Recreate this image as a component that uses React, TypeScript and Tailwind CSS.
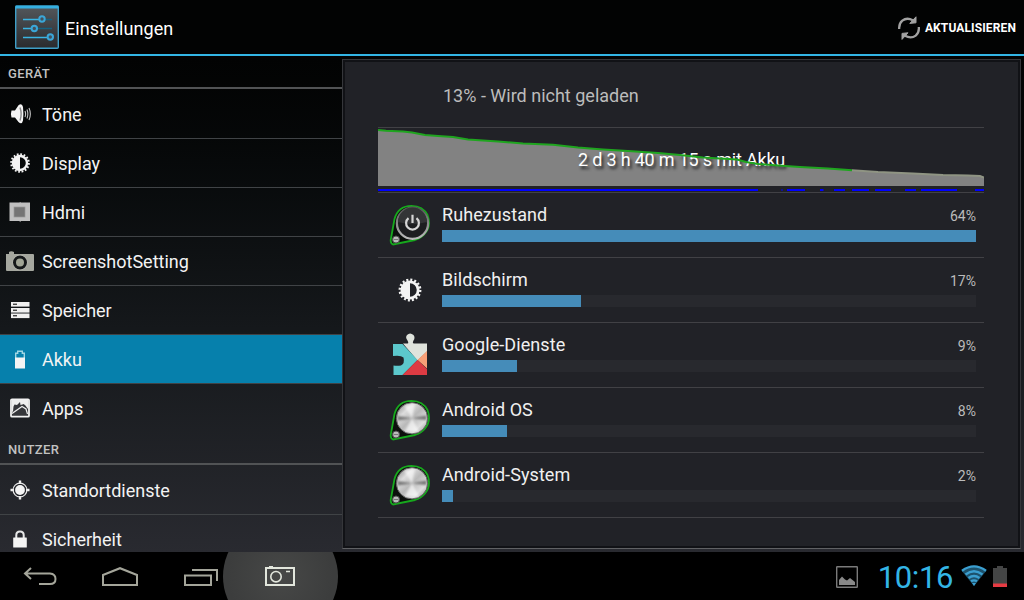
import type { ReactNode } from 'react'

interface NavItem {
  label: string
  icon: ReactNode
  active?: boolean
}

interface UsageEntry {
  name: string
  percent: number
  width: number
  icon: ReactNode
}

function SoundIcon() {
  return (
    <svg width="24" height="24" viewBox="0 0 24 24" fill="none">
      <path d="M3.5 8.5H7L10.5 3.2Q14 0.5 15 5Q15.8 12 15 18.5Q14 23 10.5 20L7 15.5H3.5Q2.3 12 3.5 8.5Z" fill="#f4f4f4" />
      <path d="M12 5.5Q14.3 12 12 18.5" stroke="#8a8a8a" strokeWidth="1.4" />
      <path d="M17 9Q18.2 12 17 15M19 7.5Q20.7 12 19 16.5M21 6Q23.7 12 21 18" stroke="#c4c4c4" strokeWidth="1.1" />
    </svg>
  )
}

function BrightnessIcon({ size = 24 }: { size?: number }) {
  return (
    <svg width={size} height={size} viewBox="0 0 24 24" fill="none">
      <circle cx="12" cy="12" r="8.8" stroke="#f4f4f4" strokeWidth="2" strokeDasharray="1.75 1.705" />
      <circle cx="12" cy="12" r="7" stroke="#f4f4f4" strokeWidth="2.4" />
      <path d="M12 4.5A7.5 7.5 0 0 0 12 19.5Z" fill="#f4f4f4" />
    </svg>
  )
}

function HdmiIcon() {
  return (
    <svg width="24" height="24" viewBox="0 0 24 24">
      <path d="M1.5 2.5H11.5L12 2L13 2.5H22V21H13L12 22L11.5 21H1.5Z" fill="#c0c0c0" />
      <rect x="6" y="7" width="11" height="10" fill="#757575" stroke="#999" strokeWidth="0.7" />
    </svg>
  )
}

function CameraIcon() {
  return (
    <svg width="30" height="24" viewBox="0 0 30 24">
      <path d="M1 5H4V3Q6 1.5 9 3V5H28Q29 5 29 6V21Q29 22 28 22H2Q1 22 1 21Z" fill="#a5a79f" />
      <circle cx="15" cy="13.5" r="7.4" fill="#c2c4bc" />
      <circle cx="15" cy="13.5" r="5.5" fill="#a1a596" stroke="#15181a" strokeWidth="3" />
    </svg>
  )
}

function StorageIcon() {
  return (
    <svg width="24" height="24" viewBox="0 0 24 24">
      {[4, 10, 15.5].map(y => (
        <g key={y}>
          <rect x="3" y={y} width="18.5" height="4.6" fill="#f0f0f0" />
          <rect x="5" y={y + 1.6} width="4" height="1.3" fill="#333" />
        </g>
      ))}
    </svg>
  )
}

function BatteryIcon() {
  return (
    <svg width="24" height="24" viewBox="0 0 24 24" fill="none">
      <path d="M7.7 11V6.2H9.7V4.2H14.3V6.2H16.3V11" stroke="#9fd6e4" strokeWidth="1.4" />
      <rect x="7" y="10.5" width="10" height="11" fill="#f4f4f4" />
    </svg>
  )
}

function AppsIcon() {
  return (
    <svg width="24" height="24" viewBox="0 0 24 24" fill="none">
      <rect x="3" y="3.3" width="18" height="17.4" rx="1" fill="#35363a" stroke="#f2f2f2" strokeWidth="1.8" />
      <path d="M4 4H20V13L17 9L13 10L4 16Z" fill="#eee" />
      <path d="M5.5 10.5L6.5 8.5L9 9L12 6L12.5 9L16 8L17.5 10.5L12 12.5L5 15.5Z" fill="#35363a" />
      <path d="M4 17.5L14 10.5L18 13L19.5 18" stroke="#eee" strokeWidth="1.2" />
    </svg>
  )
}

function LocationIcon() {
  return (
    <svg width="24" height="24" viewBox="0 0 24 24" fill="none">
      <path d="M12 2.5V6M12 18V21.5M2.5 12H6M18 12H21.5" stroke="#f0f0f0" strokeWidth="2.4" />
      <circle cx="12" cy="12" r="6.9" stroke="#e6e6e6" strokeWidth="1.2" />
      <circle cx="12" cy="12" r="4.9" fill="#f4f4f4" />
    </svg>
  )
}

function LockIcon() {
  return (
    <svg width="24" height="24" viewBox="0 0 24 24" fill="none">
      <path d="M8.3 12V8Q8.3 4.5 12 4.5Q15.7 4.5 15.7 8V12" stroke="#e8e8e8" strokeWidth="2" />
      <rect x="5.2" y="10.5" width="13.6" height="10" rx="0.5" fill="#f4f4f4" />
    </svg>
  )
}

function SettingsLogo() {
  return (
    <svg width="44" height="44" viewBox="0 0 44 44" fill="none">
      <defs>
        <linearGradient id="tile" x1="0" y1="0" x2="0" y2="1">
          <stop offset="0" stopColor="#53575b" />
          <stop offset="1" stopColor="#2a2b2e" />
        </linearGradient>
      </defs>
      <rect x="0.7" y="1.2" width="42.6" height="42" rx="1" fill="url(#tile)" stroke="#3f9fc8" strokeWidth="1.4" />
      <rect x="0.5" y="0.5" width="43" height="3" fill="#35afe0" />
      <path d="M8 14.5H24M8 23.5H16M8 32.5H32" stroke="#3bb4e2" strokeWidth="1.5" />
      <path d="M30 14.5H37M22 23.5H37" stroke="#17617f" strokeWidth="1.4" />
      <g stroke="#3aa6d8" strokeWidth="2" fill="#45505a">
        <circle cx="27" cy="14" r="2.7" />
        <circle cx="19.3" cy="23.5" r="2.7" />
        <circle cx="35.3" cy="32" r="2.7" />
      </g>
    </svg>
  )
}

function RefreshIcon() {
  return (
    <svg width="24" height="24" viewBox="0 0 24 24" fill="none">
      <path d="M2.2 13Q1.8 7.5 5.3 4.6Q10 1 15.8 4.3M21.8 11Q22.4 16.5 18.7 19.6Q14 23.2 8 19.8" stroke="#a2a2a2" strokeWidth="2.3" />
      <path d="M12.8 7.4L19 6.8V0.8ZM11 16.8L5 17.4V23.4Z" fill="#a2a2a2" stroke="#a2a2a2" />
    </svg>
  )
}

// round knob hanging in a green teardrop outline
function KnobIcon({ power = false }: { power?: boolean }) {
  return (
    <svg width="44" height="44" viewBox="0 0 44 44" fill="none">
      <defs>
        <linearGradient id="steel" x1="0" y1="0" x2="1" y2="1">
          <stop offset="0" stopColor="#777" />
          <stop offset="0.28" stopColor="#ddd" />
          <stop offset="0.5" stopColor="#b9b9b9" />
          <stop offset="0.75" stopColor="#dedede" />
          <stop offset="1" stopColor="#858585" />
        </linearGradient>
        <linearGradient id="rim" x1="0" y1="0" x2="0" y2="1">
          <stop offset="0" stopColor="#555" />
          <stop offset="1" stopColor="#bbb" />
        </linearGradient>
        <filter id="soften">
          <feGaussianBlur stdDeviation="1.1" />
        </filter>
      </defs>
      <path
        d="M5 41.5Q2.2 40.5 2.8 36.5L6.5 16Q10 3 23.5 2.8Q35 3 39.5 12Q43.5 22.5 37 30.5Q33 35.5 27 37Z"
        fill="#0c0f0c"
        stroke="#17a81d"
        strokeWidth="1.8"
      />
      {power ? (
        <>
          <circle cx="24.5" cy="20.3" r="15.6" fill="#1d1e20" stroke="url(#rim)" strokeWidth="2.2" />
          <path d="M10 19A14.5 14.5 0 0 1 39 19Q24.5 23 10 19Z" fill="#333436" />
          <path d="M20.5 15.2A6.4 6.4 0 1 0 28.5 15.2M24.5 11.8V20" stroke="#d6d6d6" strokeWidth="2.2" />
        </>
      ) : (
        <>
          <circle cx="24" cy="20.3" r="15.6" fill="url(#steel)" stroke="#666" strokeWidth="1" />
          <g filter="url(#soften)">
            <path d="M24 20.3L9.5 22.5L9.5 18ZM24 20.3L38.5 17.5L38.5 22Z" fill="#555" opacity="0.75" />
            <path d="M24 20.3L16 7.5L27 6ZM24 20.3L17 33.5L31 33.5Z" fill="#fff" opacity="0.6" />
          </g>
        </>
      )}
      <circle cx="8" cy="36.5" r="3.5" fill="#bbb" stroke="#4d4d4d" />
      <path d="M5.5 36.5H10.5" stroke="#666" strokeWidth="0.8" />
    </svg>
  )
}

function PlayServicesIcon() {
  return (
    <svg width="44" height="44" viewBox="0 0 44 44">
      <path d="M15 10.5H19.5Q21 10.5 19.5 7.5Q17 4.5 19 2Q22 -1 25.5 2Q27.5 4.5 25.5 7.5Q24 10.5 26 10.5H39V18.5L29.5 27.5Z" fill="#dfe3dc" />
      <path d="M5 11H14.5L29.5 27L14.5 42H5.5V32.5Q9 33 13 32.5Q17 30.5 15.5 24.5Q13 22 5 23Z" fill="#5cc8cc" />
      <path d="M39 18V35.5L29.5 27Z" fill="#f9a077" />
      <path d="M29.5 27L39 36V42H14.5Z" fill="#dd3b43" />
    </svg>
  )
}

const deviceItems: NavItem[] = [
  { label: 'Töne', icon: <SoundIcon /> },
  { label: 'Display', icon: <BrightnessIcon /> },
  { label: 'Hdmi', icon: <HdmiIcon /> },
  { label: 'ScreenshotSetting', icon: <CameraIcon /> },
  { label: 'Speicher', icon: <StorageIcon /> },
  { label: 'Akku', icon: <BatteryIcon />, active: true },
  { label: 'Apps', icon: <AppsIcon /> },
]

const userItems: NavItem[] = [
  { label: 'Standortdienste', icon: <LocationIcon /> },
  { label: 'Sicherheit', icon: <LockIcon /> },
]

const usage: UsageEntry[] = [
  { name: 'Ruhezustand', percent: 64, width: 534, icon: <KnobIcon power /> },
  { name: 'Bildschirm', percent: 17, width: 139, icon: <BrightnessIcon size={28} /> },
  { name: 'Google-Dienste', percent: 9, width: 75, icon: <PlayServicesIcon /> },
  { name: 'Android OS', percent: 8, width: 65, icon: <KnobIcon /> },
  { name: 'Android-System', percent: 2, width: 11, icon: <KnobIcon /> },
]

// battery level over time, in chart pixels
const level =
  '0,2 8,2.8 25,3.5 34,4.5 47,7 60,8 75,9 90,11.5 120,13.5 145,15.5 175,16.7 200,19.5 225,21.5 250,23 280,25 302,27 325,29.5 359,31.5 368,34 380,36 400,37.6 422,39 450,40.5 474,42.3'
const levelTail = '474,42.3 500,44 535,45.5 565,47 590,47.5 602,48 606,49.5'

const awake = [[0, 380], [403.5, 1], [409, 18], [442, 3.5], [456, 11], [474, 17], [497, 16], [527, 11], [543, 36], [597, 9]]

function SectionHeader({ title }: { title: string }) {
  return (
    <div className="mb-px flex h-[33px] shrink-0 items-center border-b-2 border-[#515355] px-2 pt-1 text-[13px] font-medium tracking-[0.4px] text-[#c2c2c2]">
      {title}
    </div>
  )
}

function NavList({ items }: { items: NavItem[] }) {
  return (
    <ul>
      {items.map(item => (
        <li
          key={item.label}
          className={`flex h-[49px] items-center border-b border-[#404346] text-[18px] text-[#f3f3f3] last:h-12 last:border-b-0 ${
            item.active ? 'bg-[#0680ac]' : ''
          }`}
        >
          <span className="flex w-10 shrink-0 justify-center">{item.icon}</span>
          <span className="ml-0.5">{item.label}</span>
        </li>
      ))}
    </ul>
  )
}

function BatteryChart() {
  return (
    <div className="relative h-[66px] border-y border-[#414145]">
      <svg className="absolute inset-0" width="606" height="64" viewBox="0 0 606 64">
        <polygon points={`0,58 ${level} ${levelTail} 606,58`} fill="#828282" />
        {awake.map(([x, w]) => (
          <rect key={x} x={x} y="61" width={w} height="2" fill="#0000ff" />
        ))}
      </svg>
      <span className="absolute left-[200px] top-[18px] whitespace-pre text-[18px] leading-7 tracking-[-0.19px] text-white [text-shadow:2px_3px_3px_#222]">
        2 d 3 h 40 m 15 s mit Akku
      </span>
      <svg className="absolute inset-0" width="606" height="64" viewBox="0 0 606 64" fill="none">
        <polyline points={level} stroke="#1fa51f" strokeWidth="2" />
        <polyline points={levelTail} stroke="#8f9483" strokeWidth="2" />
      </svg>
    </div>
  )
}

function UsageRow({ entry }: { entry: UsageEntry }) {
  return (
    <div className="flex h-[65px] border-b border-[#414145] pr-2">
      <div className="flex w-16 shrink-0 items-center justify-center">{entry.icon}</div>
      <div className="flex-1">
        <div className="flex h-[37px] items-end justify-between pb-0.5">
          <span className="text-[18px] tracking-[0.08px] text-[#f0f0f0]">{entry.name}</span>
          <span className="pb-px text-[14px] text-[#bcbcbc]">{entry.percent}%</span>
        </div>
        <div className="h-3 bg-[#28292e]">
          <div className="h-3 bg-[#458cb9]" style={{ width: entry.width }} />
        </div>
      </div>
    </div>
  )
}

function SystemBar() {
  return (
    <footer className="flex h-12 shrink-0 items-center overflow-hidden bg-black">
      <div className="flex w-20 justify-center pt-0.5">
        <svg width="36" height="22" viewBox="0 0 36 22" fill="none" stroke="#a4a59a" strokeWidth="2">
          <path d="M9 2L3 7.5L9 13M3 7.5H28Q33.5 8 33.5 13Q33.5 18 28 18H17" />
        </svg>
      </div>
      <div className="flex w-20 justify-center pt-0.5">
        <svg width="38" height="22" viewBox="0 0 38 22" fill="none" stroke="#a4a59a" strokeWidth="2">
          <path d="M2 19V9L19 2.2L36 9V19Z" />
        </svg>
      </div>
      <div className="flex w-[63px] justify-end pr-[5px] pt-0.5">
        <svg width="34" height="18" viewBox="0 0 34 18" fill="none" stroke="#a4a59a" strokeWidth="2">
          <path d="M1 7.5H27V17H1ZM8 2H33V13" />
        </svg>
      </div>
      <div className="flex size-[115px] shrink-0 items-center justify-center rounded-full bg-radial from-[#474847] to-[#3c3d3d] to-65% pr-0.5">
        <svg width="30" height="20" viewBox="0 0 30 20" fill="none" stroke="#e2e6dc">
          <rect x="1" y="2" width="28" height="17" strokeWidth="2" />
          <path d="M4 0.8H8M21 5.5H25" strokeWidth="1.6" />
          <circle cx="11" cy="10.7" r="5.2" strokeWidth="1.6" />
        </svg>
      </div>
      <div className="ml-auto flex items-center pr-[17px] pt-0.5">
        <svg className="mr-5" width="22" height="22" viewBox="0 0 22 22" fill="none">
          <rect x="0.7" y="0.7" width="20.6" height="20.6" rx="0.5" stroke="#7a7a7a" strokeWidth="1.4" />
          <path d="M3 19V14L6 10.5L9 13.5L11 14.5L14 12L19 16V19Z" fill="#888" />
        </svg>
        <span className="pt-px text-[31px] leading-[44px] tracking-[-0.4px] text-[#33b5e5]">10:16</span>
        <svg className="ml-2 -mt-0.5" width="26" height="22" viewBox="0 0 26 22" fill="none">
          <path d="M0.5 5.5Q13 -4 25.5 5.5L13 21Z" fill="#1d526c" />
          <path d="M1 5.7Q13 -3 25 5.7M4.5 9.5Q13 3 21.5 9.5M7.5 13Q13 9 18.5 13M10 16.3Q13 14.3 16 16.3" stroke="#3b9fd0" strokeWidth="2.3" />
          <path d="M11 18L13 21L15 18Z" fill="#3b9fd0" />
        </svg>
        <svg className="ml-[6px] -mt-0.5" width="14" height="21" viewBox="0 0 14 21">
          <path d="M0 2H4V0H10V2H14V21H0Z" fill="#444545" />
          <rect y="17.5" width="14" height="3.5" fill="#e63b43" />
        </svg>
      </div>
    </footer>
  )
}

export default function App() {
  return (
    <div className="flex h-[600px] w-[1024px] flex-col overflow-hidden bg-black font-[Roboto,sans-serif] text-white">
      <header className="flex h-14 shrink-0 items-center border-b-2 border-[#33b5e5] bg-[#020303] pl-[15px] pr-2">
        <SettingsLogo />
        <h1 className="ml-1.5 pt-0.5 text-[18px] tracking-[0.06px]">Einstellungen</h1>
        <button className="ml-auto flex items-center gap-1 pt-0.5 text-[12px] font-bold tracking-[0.12px]">
          <RefreshIcon />
          AKTUALISIEREN
        </button>
      </header>

      <main className="flex min-h-0 flex-1 bg-linear-to-b from-[#020303] via-[#15181b] via-55% to-[#292a30]">
        <nav className="flex w-[342px] shrink-0 flex-col overflow-hidden">
          <SectionHeader title="GERÄT" />
          <NavList items={deviceItems} />
          <SectionHeader title="NUTZER" />
          <NavList items={userItems} />
        </nav>
        <section className="mt-[3px] mb-[3px] mr-[3px] flex-1 border border-[#35363a] border-b-[#606164] bg-[#212227] pl-[35px] pr-9 shadow-[inset_0_0_0_2px_#111216]">
          <p className="flex h-[67px] items-center pl-[65px] pt-1 text-[18px] text-[#bcbcbc]">13% - Wird nicht geladen</p>
          <BatteryChart />
          {usage.map(entry => (
            <UsageRow key={entry.name} entry={entry} />
          ))}
        </section>
      </main>

      <SystemBar />
    </div>
  )
}
